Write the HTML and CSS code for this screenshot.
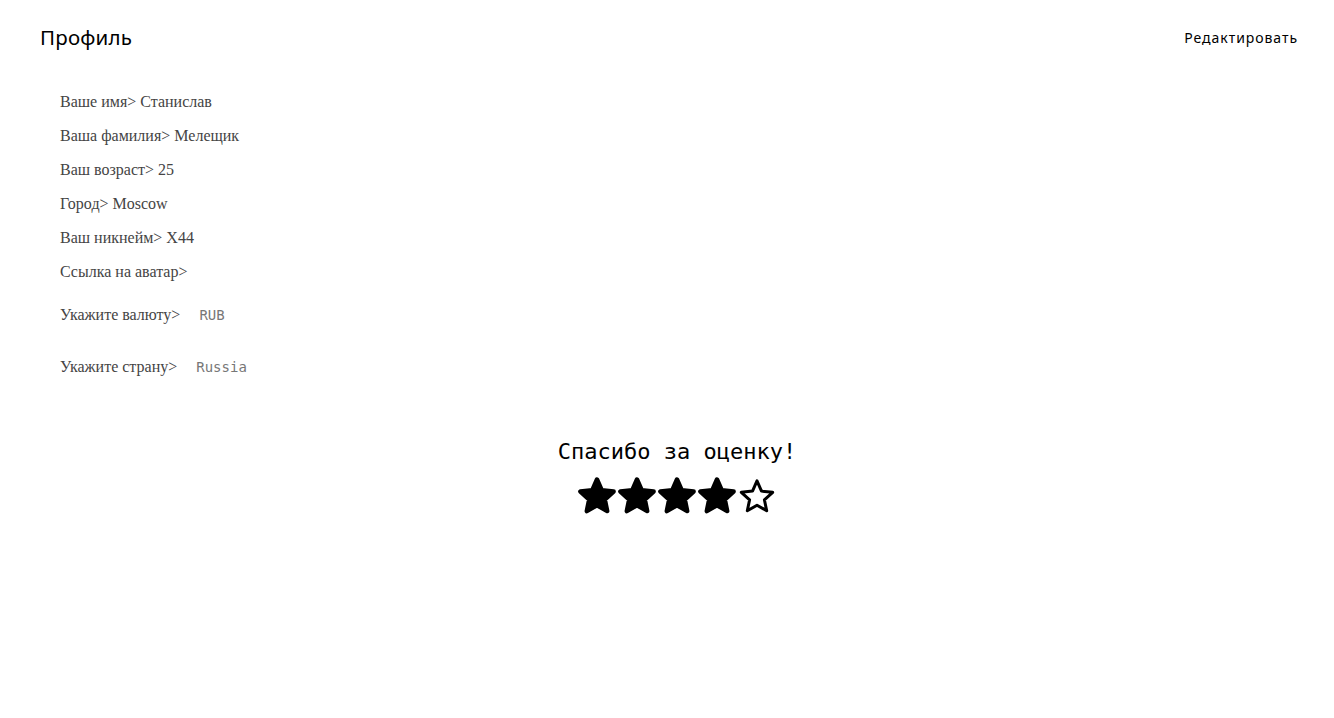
FILE: index.html
```html
<!DOCTYPE html>
<html lang="ru">
<head>
<meta charset="utf-8">
<title>Профиль</title>
<link rel="stylesheet" href="styles.css">
</head>
<body>
<header class="header">
  <h1 class="title">Профиль</h1>
  <a class="edit">Редактировать</a>
</header>
<main class="profile">
  <div class="row">Ваше имя&gt; Станислав</div>
  <div class="row">Ваша фамилия&gt; Мелещик</div>
  <div class="row">Ваш возраст&gt; 25</div>
  <div class="row">Город&gt; Moscow</div>
  <div class="row">Ваш никнейм&gt; X44</div>
  <div class="row">Ссылка на аватар&gt;</div>
  <div class="row row-select row-currency">Укажите валюту&gt;<span class="value">RUB</span></div>
  <div class="row row-select row-country">Укажите страну&gt;<span class="value">Russia</span></div>
</main>
<section class="rating">
  <div class="thanks">Спасибо за оценку!</div>
  <div class="stars">
    <svg class="star" viewBox="0 0 40 40"><polygon class="full" points="20,3.5 24.8,14.3 36.6,15.55 27.8,23.5 30.2,35.1 20,29.2 9.8,35.1 12.2,23.5 3.4,15.55 15.2,14.3"/></svg>
    <svg class="star" viewBox="0 0 40 40"><polygon class="full" points="20,3.5 24.8,14.3 36.6,15.55 27.8,23.5 30.2,35.1 20,29.2 9.8,35.1 12.2,23.5 3.4,15.55 15.2,14.3"/></svg>
    <svg class="star" viewBox="0 0 40 40"><polygon class="full" points="20,3.5 24.8,14.3 36.6,15.55 27.8,23.5 30.2,35.1 20,29.2 9.8,35.1 12.2,23.5 3.4,15.55 15.2,14.3"/></svg>
    <svg class="star" viewBox="0 0 40 40"><polygon class="full" points="20,3.5 24.8,14.3 36.6,15.55 27.8,23.5 30.2,35.1 20,29.2 9.8,35.1 12.2,23.5 3.4,15.55 15.2,14.3"/></svg>
    <svg class="star" viewBox="0 0 40 40"><polygon class="empty" points="20,4.8 24.5,15.1 35.7,16.3 27.4,23.8 29.7,34.8 20,29.2 10.3,34.8 12.6,23.8 4.3,16.3 15.5,15.1"/></svg>
  </div>
</section>
</body>
</html>
```

FILE: styles.css
```css
html, body {
  margin: 0;
  padding: 0;
  background: #fff;
}

body {
  font-family: "Liberation Serif", "Times New Roman", serif;
}

.header {
  display: flex;
  justify-content: space-between;
  align-items: center;
  padding: 23px 36px 0 40px;
  height: 28px;
}

.title {
  margin: 0;
  font-family: "Noto Sans", "Open Sans", sans-serif;
  font-weight: 400;
  font-size: 20.5px;
  letter-spacing: 0.2px;
  color: #000;
}

.edit {
  font-family: "Noto Sans", "Open Sans", sans-serif;
  font-size: 14px;
  letter-spacing: 0.95px;
  color: #000;
  cursor: pointer;
}

.profile {
  padding: 42px 0 0 60px;
}

.row {
  font-size: 16px;
  line-height: 18px;
  color: #444;
  margin-bottom: 16px;
}

.row-currency {
  margin-top: 25px;
}

.row-country {
  margin-top: 34px;
}

.value {
  margin-left: 19px;
  font-family: "DejaVu Sans Mono", "Liberation Mono", monospace;
  font-size: 14px;
  color: #777;
}

.rating {
  display: flex;
  flex-direction: column;
  align-items: center;
  padding: 47px 0 0 20px;
}

.thanks {
  font-family: "DejaVu Sans Mono", "Liberation Mono", monospace;
  font-size: 22px;
  line-height: 26px;
  color: #000;
}

.stars {
  display: flex;
  margin-top: 11px;
}

.star {
  width: 40px;
  height: 40px;
  display: block;
}

.full {
  fill: #000;
  stroke: #000;
  stroke-width: 4.5;
  stroke-linejoin: round;
}

.empty {
  fill: #fff;
  stroke: #000;
  stroke-width: 3;
  stroke-linejoin: round;
}
```
